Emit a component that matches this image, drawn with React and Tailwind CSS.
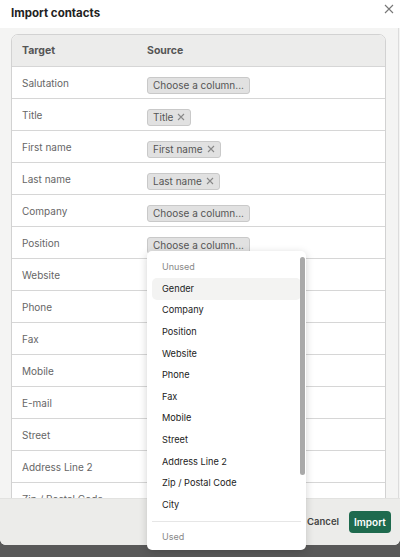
import React from "react";

const rows = [
  { label: "Salutation", value: null },
  { label: "Title", value: "Title" },
  { label: "First name", value: "First name" },
  { label: "Last name", value: "Last name" },
  { label: "Company", value: null },
  { label: "Position", value: null },
  { label: "Website" },
  { label: "Phone" },
  { label: "Fax" },
  { label: "Mobile" },
  { label: "E-mail" },
  { label: "Street" },
  { label: "Address Line 2" },
  { label: "Zip / Postal Code" },
];

const unused = [
  "Gender",
  "Company",
  "Position",
  "Website",
  "Phone",
  "Fax",
  "Mobile",
  "Street",
  "Address Line 2",
  "Zip / Postal Code",
  "City",
];

function Chip({ children, removable }) {
  return (
    <span className="inline-flex items-center gap-[4px] h-[17px] px-[5px] rounded-[3px] border border-[#c9c9c9] bg-[#e1e1e1] text-[10px] text-[#555] leading-none">
      {children}
      {removable && (
        <svg width="8" height="8" viewBox="0 0 8 8" className="text-[#888]">
          <path d="M1 1L7 7M7 1L1 7" stroke="currentColor" strokeWidth="1.1" />
        </svg>
      )}
    </span>
  );
}

function Row({ label, value, index }) {
  const showChip = index < 6;
  return (
    <div className="flex items-center h-[32px] border-t border-[#d6d6d6] pt-[1px]">
      <div className="w-[135px] pl-[10px] text-[10px] text-[#666]">{label}</div>
      <div className="flex-1">
        {showChip &&
          (value ? (
            <Chip removable>{value}</Chip>
          ) : (
            <Chip>Choose a column...</Chip>
          ))}
      </div>
    </div>
  );
}

export default function App() {
  return (
    <div
      className="relative w-[400px] h-[557px] overflow-hidden bg-[#595959]"
      style={{ fontFamily: "Inter, 'Liberation Sans', sans-serif" }}
    >
      <div className="flex flex-col h-[545px] bg-white rounded-b-[6px] overflow-hidden">
        {/* Title bar */}
        <div className="flex items-center justify-between h-[28px] pl-[11px] pr-[6px] shrink-0">
          <h1 className="text-[11.5px] font-bold text-[#222]">Import contacts</h1>
          <svg width="10" height="10" viewBox="0 0 10 10" className="text-[#777] -mt-[10px]">
            <path d="M1 1L9 9M9 1L1 9" stroke="currentColor" strokeWidth="1.1" />
          </svg>
        </div>

        {/* Scrollable mapping table */}
        <div className="relative flex-1 bg-[#f4f4f3] pt-[6px] pl-[11px] pr-[14px] overflow-hidden">
          <div className="rounded-t-[7px] border border-[#d2d2d2] bg-white overflow-hidden">
            <div className="flex items-center h-[31px] bg-[#ececeb] text-[10.5px] font-bold text-[#555]">
              <div className="w-[135px] pl-[10px]">Target</div>
              <div className="flex-1">Source</div>
            </div>
            {rows.map((r, i) => (
              <Row key={r.label} index={i} {...r} />
            ))}
          </div>
          <div className="absolute top-0 bottom-0 right-[1px] w-px bg-[#dcdcdc]" />
        </div>

        {/* Footer */}
        <div className="flex items-center justify-end gap-[10px] h-[47px] shrink-0 bg-[#ececea] pr-[9px] border-t border-[#e2e2e0]">
          <button className="text-[9.5px] font-semibold text-[#444]">Cancel</button>
          <button className="h-[22px] w-[42px] rounded-[4px] bg-[#1e6a4e] text-[10px] font-semibold text-white">
            Import
          </button>
        </div>
      </div>

      {/* Column picker menu */}
      <div className="absolute left-[147px] top-[251px] w-[159px] h-[299px] bg-white rounded-[5px] shadow-[0_2px_8px_rgba(0,0,0,0.18)] overflow-hidden">
        <div className="px-[5px] pt-[9px]">
          <div className="pl-[10px] text-[9px] text-[#888] h-[18px] leading-[14px]">Unused</div>
          {unused.map((u, i) => (
            <div
              key={u}
              className={`flex items-center h-[21.6px] pl-[10px] text-[9.2px] text-[#222] rounded-[5px] ${
                i === 0 ? "bg-[#f3f3f2]" : ""
              }`}
            >
              {u}
            </div>
          ))}
          <div className="mt-[5px] border-t border-[#e6e6e6]" />
          <div className="pl-[10px] pt-[8px] text-[9px] text-[#888]">Used</div>
        </div>
        <div className="absolute right-[1px] top-[6px] w-[5px] h-[218px] rounded-full bg-[#a9a9a9]" />
      </div>
    </div>
  );
}
